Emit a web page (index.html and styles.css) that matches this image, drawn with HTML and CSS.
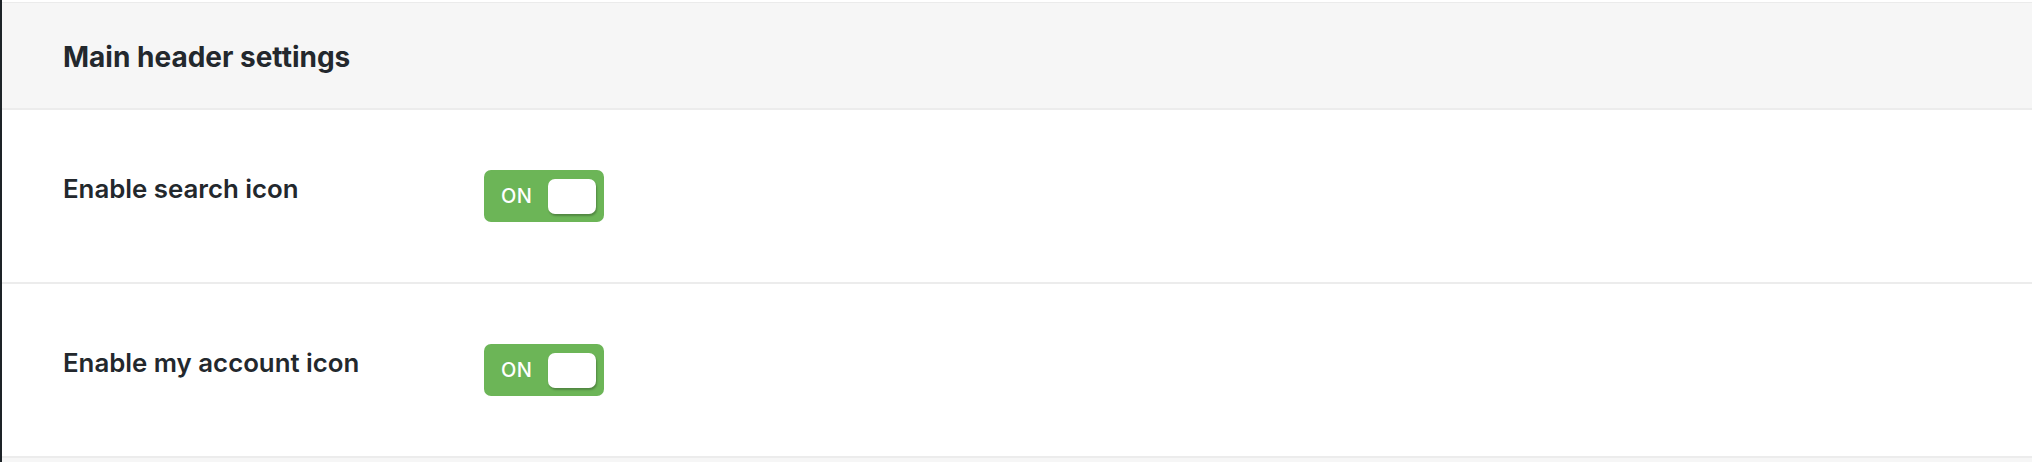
FILE: index.html
```html
<!DOCTYPE html>
<html>
<head>
<meta charset="utf-8">
<link rel="stylesheet" href="styles.css">
</head>
<body>
<div class="page">
  <div class="card">
    <div class="card-header">
      <h2 class="card-title">Main header settings</h2>
    </div>
    <div class="setting-row">
      <div class="setting-label">Enable search icon</div>
      <div class="setting-control">
        <div class="toggle on">
          <span class="toggle-text">ON</span>
          <span class="toggle-knob"></span>
        </div>
      </div>
    </div>
    <div class="setting-row">
      <div class="setting-label">Enable my account icon</div>
      <div class="setting-control">
        <div class="toggle on">
          <span class="toggle-text">ON</span>
          <span class="toggle-knob"></span>
        </div>
      </div>
    </div>
    <div class="card-footer"></div>
  </div>
</div>
</body>
</html>
```

FILE: styles.css
```css
html, body {
  margin: 0;
  padding: 0;
  background: #ffffff;
}

body {
  font-family: Inter, "Noto Sans", "Liberation Sans", sans-serif;
  color: #23282d;
}

.page {
  border-left: 2px solid #1d2327;
  padding-top: 2px;
  min-height: 460px;
}

.card {
  border-top: 1px solid #ebebeb;
}

.card-header {
  background: #f6f6f6;
  height: 68px;
  border-bottom: 2px solid #ececec;
  padding: 37px 0 0 61px;
}

.card-title {
  margin: 0;
  font-size: 28px;
  font-weight: 700;
  line-height: 34px;
}

.setting-row {
  display: flex;
  align-items: flex-start;
  height: 172px;
  border-bottom: 2px solid #ececec;
}

.setting-label {
  width: 421px;
  padding-left: 61px;
  padding-top: 64px;
  font-size: 25.8px;
  font-weight: 600;
  line-height: 30px;
}

.setting-control {
  padding-top: 60px;
}

.toggle {
  width: 120px;
  height: 52px;
  border-radius: 7px;
  background: #6cb557;
  display: flex;
  align-items: center;
  justify-content: space-between;
  padding: 0 8px 0 17px;
  box-sizing: border-box;
}

.toggle-text {
  color: #ffffff;
  font-size: 20px;
  font-weight: 500;
  letter-spacing: 0.5px;
}

.toggle-knob {
  width: 48px;
  height: 35px;
  background: #ffffff;
  border-radius: 7px;
  box-shadow: 1px 2px 2px rgba(0, 0, 0, 0.25);
}

.card-footer {
  background: #f6f6f6;
  height: 10px;
}
```
